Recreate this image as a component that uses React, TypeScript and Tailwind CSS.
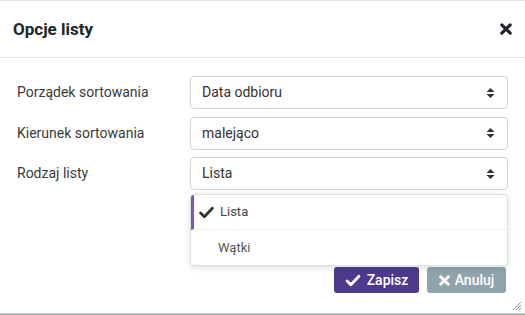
import React from "react";

const SortCaret = () => (
  <svg width="9" height="12" viewBox="0 0 9 12" className="text-[#333]">
    <path d="M4.5 1 L8.5 5 L0.5 5 Z" fill="currentColor" />
    <path d="M4.5 11 L8.5 7 L0.5 7 Z" fill="currentColor" />
  </svg>
);

const Check = ({ className, w = 14, h = 12 }: { className?: string; w?: number; h?: number }) => (
  <svg width={w} height={h} viewBox="0 0 14 12" className={className}>
    <path d="M1.5 6.5 L5 10 L12.5 2" fill="none" stroke="currentColor" strokeWidth="2.6" strokeLinecap="round" strokeLinejoin="round" />
  </svg>
);

const Cross = ({ className, size = 11 }: { className?: string; size?: number }) => (
  <svg width={size} height={size} viewBox="0 0 10 10" className={className}>
    <path d="M1.5 1.5 L8.5 8.5 M8.5 1.5 L1.5 8.5" fill="none" stroke="currentColor" strokeWidth="2.6" strokeLinecap="round" />
  </svg>
);

const rows = [
  { label: "Porządek sortowania", value: "Data odbioru" },
  { label: "Kierunek sortowania", value: "malejąco" },
  { label: "Rodzaj listy", value: "Lista" },
];

export default function App() {
  return (
    <div
      className="relative w-[525px] h-[315px] bg-white border-t border-[#dee2e6] overflow-hidden text-[#333]"
      style={{ fontFamily: "Roboto, 'Liberation Sans', sans-serif" }}
    >
      {/* Nagłówek */}
      <div className="flex items-center justify-between h-[57px] pl-[13px] pr-[13px] border-b border-[#dee2e6]">
        <h2 className="text-[17px] font-bold text-[#212529] mt-[2px]">Opcje listy</h2>
        <Cross className="text-[#212529]" size={12} />
      </div>

      {/* Formularz */}
      <div className="relative px-[17px] pt-[18px]">
        <div className="flex flex-col gap-[7.5px]">
          {rows.map((r) => (
            <div key={r.label} className="grid grid-cols-[173px_1fr] items-center">
              <label className="text-[14px] text-[#3a3a3a]">{r.label}</label>
              <div className="flex items-center justify-between h-[33px] border border-[#ced4da] rounded-[4px] pl-[11px] pr-[12px] text-[14px] text-[#333]">
                <span>{r.value}</span>
                <SortCaret />
              </div>
            </div>
          ))}
        </div>

        {/* Stopka */}
        <div className="flex justify-end gap-[8px] mt-[77px] pr-[2px]">
          <button className="flex items-center gap-[6px] h-[26px] w-[85px] justify-center bg-[#4d3a8c] text-white text-[14px] font-medium rounded-[3px]">
            <Check className="text-white" w={16} h={13} />
            Zapisz
          </button>
          <button className="flex items-center gap-[5px] h-[26px] w-[79px] justify-center bg-[#90a4ae] text-white text-[14px] font-medium rounded-[3px]">
            <Cross className="text-white" size={11} />
            Anuluj
          </button>
        </div>

        {/* Rozwinięta lista */}
        <div className="absolute left-[190px] top-[136px] w-[318px] bg-white border border-[#dcdfe3] rounded-[4px] shadow-[0_2px_6px_rgba(0,0,0,0.12)] overflow-hidden">
          <div className="flex items-center h-[35px] border-l-[3px] border-[#7e57c2] border-b border-b-[#eceef0] pl-[5px] text-[13px] text-[#444]">
            <Check className="text-[#333] mr-[6px]" w={15} h={13} />
            Lista
          </div>
          <div className="flex items-center h-[35px] pl-[27px] text-[13px] text-[#555]">Wątki</div>
        </div>
      </div>

      {/* Uchwyt zmiany rozmiaru */}
      <svg width="11" height="11" viewBox="0 0 11 11" className="absolute right-[3px] bottom-[4px] text-[#999]">
        <path d="M10 2 L2 10 M10 5 L5 10 M10 8 L8 10" stroke="currentColor" strokeWidth="1" />
      </svg>

      <div className="absolute left-0 right-0 bottom-0 h-[2px] border-t border-[#d0d4d8] bg-[#9aa0a4]" />
    </div>
  );
}
